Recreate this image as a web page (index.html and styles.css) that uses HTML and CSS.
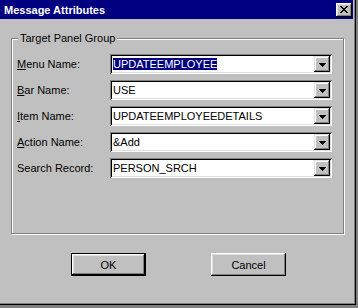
FILE: index.html
```html
<!DOCTYPE html>
<html lang="en">
<head>
  <meta charset="UTF-8" />
  <title>Message Attributes</title>
  <link rel="stylesheet" href="styles.css">
</head>
<body>
  <div class="window">
    <div class="titlebar">
      <span class="title">Message Attributes</span>
      <span class="close">
        <svg width="8" height="7" viewBox="0 0 8 7" shape-rendering="crispEdges">
          <path fill="#000" d="M0 0h2v1H0z M6 0h2v1H6z M1 1h2v1H1z M5 1h2v1H5z M2 2h4v1H2z M3 3h2v1H3z M2 4h4v1H2z M1 5h2v1H1z M5 5h2v1H5z M0 6h2v1H0z M6 6h2v1H6z"/>
        </svg>
      </span>
    </div>

    <div class="content">
      <fieldset class="group">
        <legend>Target Panel Group</legend>
        <div class="form">
          <label><u>M</u>enu Name:</label>
          <div class="combo">
            <span class="value"><span class="selected">UPDATEEMPLOYEE</span></span>
            <span class="drop"><svg width="7" height="4" viewBox="0 0 7 4" shape-rendering="crispEdges"><path fill="#000" d="M0 0h7v1H0z M1 1h5v1H1z M2 2h3v1H2z M3 3h1v1H3z"/></svg></span>
          </div>

          <label><u>B</u>ar Name:</label>
          <div class="combo">
            <span class="value">USE</span>
            <span class="drop"><svg width="7" height="4" viewBox="0 0 7 4" shape-rendering="crispEdges"><path fill="#000" d="M0 0h7v1H0z M1 1h5v1H1z M2 2h3v1H2z M3 3h1v1H3z"/></svg></span>
          </div>

          <label><u>I</u>tem Name:</label>
          <div class="combo">
            <span class="value">UPDATEEMPLOYEEDETAILS</span>
            <span class="drop"><svg width="7" height="4" viewBox="0 0 7 4" shape-rendering="crispEdges"><path fill="#000" d="M0 0h7v1H0z M1 1h5v1H1z M2 2h3v1H2z M3 3h1v1H3z"/></svg></span>
          </div>

          <label><u>A</u>ction Name:</label>
          <div class="combo">
            <span class="value">&amp;Add</span>
            <span class="drop"><svg width="7" height="4" viewBox="0 0 7 4" shape-rendering="crispEdges"><path fill="#000" d="M0 0h7v1H0z M1 1h5v1H1z M2 2h3v1H2z M3 3h1v1H3z"/></svg></span>
          </div>

          <label>Search Record:</label>
          <div class="combo">
            <span class="value">PERSON_SRCH</span>
            <span class="drop"><svg width="7" height="4" viewBox="0 0 7 4" shape-rendering="crispEdges"><path fill="#000" d="M0 0h7v1H0z M1 1h5v1H1z M2 2h3v1H2z M3 3h1v1H3z"/></svg></span>
          </div>
        </div>
      </fieldset>

      <div class="buttons">
        <button class="btn default">OK</button>
        <button class="btn">Cancel</button>
      </div>
    </div>
  </div>
</body>
</html>
```

FILE: styles.css
```css
:root {
  --face: #c0c0c0;
  --shadow: #808080;
  --light: #dfdfdf;
  --title: #000080;
}

* {
  box-sizing: border-box;
}

body {
  margin: 0;
  background: #808080;
  font-family: "Liberation Sans", Arial, sans-serif;
  font-size: 11px;
  color: #000;
}

/* window frame (left/top edge cropped off) */
.window {
  width: 356px;
  height: 305px;
  background: var(--face);
  border-right: 1px solid #000;
  border-bottom: 1px solid #000;
  box-shadow: inset -1px -1px var(--shadow);
  padding: 0 2px 2px 0;
  display: flex;
  flex-direction: column;
}

.titlebar {
  height: 19px;
  background: var(--title);
  color: #fff;
  font-weight: bold;
  display: flex;
  align-items: center;
  justify-content: space-between;
  padding: 0 1px 0 4px;
}

.close {
  width: 16px;
  height: 14px;
  background: var(--face);
  box-shadow: inset -1px -1px #000, inset 1px 1px #fff, inset -2px -2px var(--shadow), inset 2px 2px var(--light);
  display: flex;
  align-items: center;
  justify-content: center;
  padding-bottom: 1px;
}

.content {
  flex: 1;
  padding: 13px 9px 0 11px;
}

/* etched group box */
.group {
  margin: 0;
  width: 333px;
  height: 202px;
  border: 1px solid var(--shadow);
  box-shadow: 1px 1px #fff, inset 1px 1px #fff;
  padding: 9px 10px 0 5px;
}

.group legend {
  padding: 0 2px;
  margin-left: 1px;
  line-height: 13px;
  background: var(--face);
}

.form {
  display: grid;
  grid-template-columns: 93px 222px;
  grid-auto-rows: 20px;
  row-gap: 6px;
  align-items: center;
}

.form label {
  line-height: 13px;
}

/* sunken combo box */
.combo {
  height: 20px;
  background: #fff;
  display: flex;
  align-items: center;
  padding: 2px;
  box-shadow: inset 1px 1px var(--shadow), inset -1px -1px #fff, inset 2px 2px #000, inset -2px -2px var(--light);
}

.combo .value {
  flex: 1;
  padding-left: 1px;
  white-space: nowrap;
  line-height: 14px;
}

.combo .selected {
  background: var(--title);
  color: #fff;
}

.drop {
  width: 16px;
  height: 16px;
  background: var(--face);
  box-shadow: inset -1px -1px #000, inset 1px 1px var(--light), inset -2px -2px var(--shadow), inset 2px 2px #fff;
  display: flex;
  align-items: center;
  justify-content: center;
  padding-top: 1px;
}

.buttons {
  display: flex;
  justify-content: center;
  gap: 65px;
  margin-top: 19px;
  padding-left: 2px;
}

.btn {
  width: 75px;
  height: 23px;
  margin: 0;
  padding: 0;
  border: none;
  background: var(--face);
  font: inherit;
  color: #000;
  box-shadow: inset -1px -1px #000, inset 1px 1px #fff, inset -2px -2px var(--shadow), inset 2px 2px var(--light);
}

.btn.default {
  border: 1px solid #000;
}
```
